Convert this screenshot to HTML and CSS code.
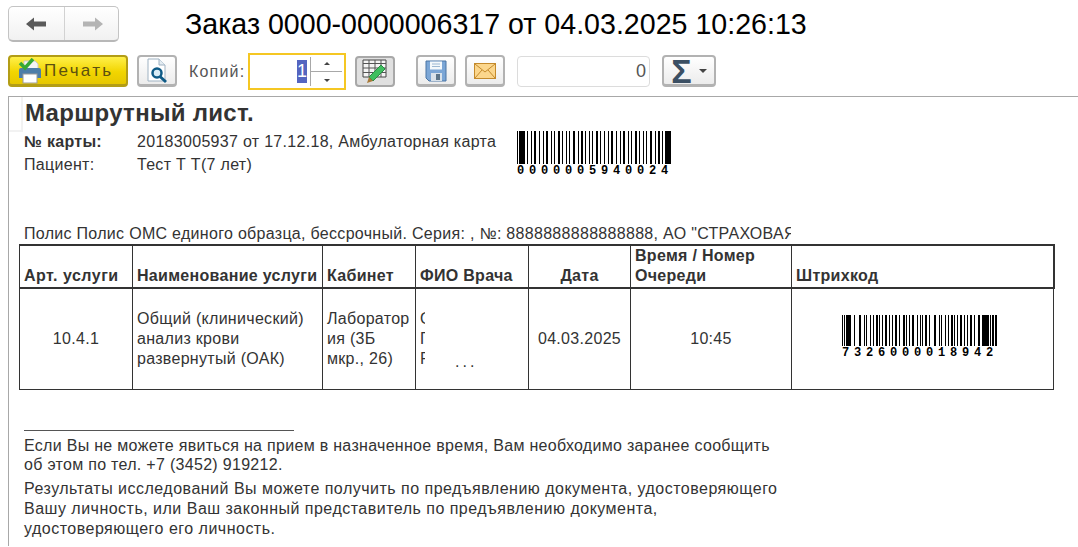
FILE: index.html
```html
<!DOCTYPE html>
<html lang="ru">
<head>
    <meta charset="UTF-8">
    <title>Заказ 0000-0000006317</title>
    <link rel="stylesheet" href="styles.css">
</head>
<body>
    <header class="title-bar">
        <div class="nav-group">
            <button class="nav-btn">
                <svg width="24" height="16" viewBox="0 0 24 16"><path d="M1 8 9 1.500V5.500H21V10.500H9V14.500Z" fill="#5a5a5a"/></svg>
            </button>
            <button class="nav-btn">
                <svg width="24" height="16" viewBox="0 0 24 16"><path d="M23 8 15 1.500V5.500H3V10.500H15V14.500Z" fill="#b4b4b4"/></svg>
            </button>
        </div>
        <h1 class="page-title">Заказ 0000-0000006317 от 04.03.2025 10:26:13</h1>
    </header>

    <div class="toolbar">
        <button class="btn btn-print">
            <svg width="24" height="26" viewBox="0 0 24 26">
                <path d="M6 12V3H17L20 6V12Z" fill="#f4f4f4" stroke="#c8c8c8"/>
                <path d="M1 12Q1 10 3 10H21Q23 10 23 12V20H1Z" fill="#4d7ea8"/>
                <rect x="5" y="16" width="14" height="9" fill="#fff" stroke="#9a9a9a"/>
                <path d="M2 5 7 10 15 1" fill="none" stroke="#35a835" stroke-width="3.500"/>
            </svg>
            <span>Печать</span>
        </button>
        <button class="btn btn-icon btn-preview">
            <svg width="24" height="26" viewBox="0 0 24 26">
                <path d="M3 1H14L20 7V23H3Z" fill="#fff" stroke="#9fb2c2"/>
                <path d="M14 1V7H20" fill="#e4ecf2" stroke="#9fb2c2"/>
                <circle cx="12" cy="15" r="4.500" fill="#d8ecf6" stroke="#0e5a86" stroke-width="2.500"/>
                <path d="M15 18.500 21 24" stroke="#0e5a86" stroke-width="3"/>
            </svg>
        </button>
        <label class="copies-label">Копий:</label>
        <div class="spin-field">
            <div class="spin-value"><span class="selected">1</span></div>
            <div class="spin-arrows">
                <div class="spin-arrow"><i class="tri-up"></i></div>
                <div class="spin-arrow"><i class="tri-down"></i></div>
            </div>
        </div>
        <button class="btn btn-icon btn-pressed btn-table">
            <svg width="26" height="26" viewBox="0 0 26 26">
                <path d="M1 2H24V19H1Z" fill="#f4f4f4" stroke="#444"/>
                <path d="M1 5.500H24M1 10H24M1 14.500H24M7 2V19M13 2V19M19 2V19" stroke="#555"/>
                <path d="M7 19 19 7 23 11 11 23Z" fill="#3fbf5f" stroke="#2a8a44"/>
                <path d="M7 19 5 25 11 23Z" fill="#a87a3a"/>
            </svg>
        </button>
        <button class="btn btn-icon btn-save">
            <svg width="22" height="22" viewBox="0 0 22 22">
                <path d="M1 1H21V21H4L1 18Z" fill="#7ba6d6" stroke="#4a74a4"/>
                <rect x="5" y="1.500" width="12" height="8" fill="#f4f8fb"/>
                <path d="M7 4H15M7 6.500H15" stroke="#9db8d2"/>
                <rect x="6" y="13" width="11" height="8" fill="#d9e2ea"/>
                <rect x="11" y="14" width="4" height="6" fill="#5c7488"/>
            </svg>
        </button>
        <button class="btn btn-icon btn-mail">
            <svg width="22" height="16" viewBox="0 0 22 16">
                <rect x="0.500" y="0.500" width="21" height="15" fill="#fbd68c" stroke="#c48a2c"/>
                <path d="M1 1 11 9 21 1M1 15 8 7M21 15 14 7" fill="none" stroke="#c48a2c"/>
            </svg>
        </button>
        <div class="sum-field">0</div>
        <button class="btn btn-sum"><span class="sigma">Σ</span><i class="tri-down tri-dark"></i></button>
    </div>

    <main class="report">
        <div class="report-head">
            <div class="corner"></div>
            <h2 class="report-title">Маршрутный лист.</h2>
        </div>

        <div class="patient-block">
            <div class="patient-info">
                <b class="info-label">№ карты:</b>
                <span>20183005937 от 17.12.18, Амбулаторная карта</span>
                <span class="info-label">Пациент:</span>
                <span>Тест Т Т(7 лет)</span>
            </div>
            <div class="barcode barcode-card">
                <svg width="155" height="33" viewBox="0 0 155 33">
                    <rect x="0" y="0" width="1" height="33"/>
                    <rect x="2" y="0" width="6" height="33"/>
                    <line x1="10" y1="16.500" x2="147" y2="16.500" stroke="#000" stroke-width="33"
                        stroke-dasharray="1 3 1 2 2 3 1 3 1 2 2 3 1 2 1 3 2 2 1 3 1 2 1 3 2 3 1 2 2 2 1 3 1 2 1 3 2 2 1 3"/>
                    <rect x="148" y="0" width="6" height="33"/>
                </svg>
                <div class="barcode-digits">0000005940024</div>
            </div>
        </div>

        <div class="policy-line">Полис Полис ОМС единого образца, бессрочный. Серия: , №: 8888888888888888, АО "СТРАХОВАЯ</div>

        <table class="services">
            <colgroup>
                <col class="col-art">
                <col class="col-name">
                <col class="col-room">
                <col class="col-doctor">
                <col class="col-date">
                <col class="col-time">
                <col class="col-code">
            </colgroup>
            <thead>
                <tr>
                    <th>Арт. услуги</th>
                    <th>Наименование услуги</th>
                    <th>Кабинет</th>
                    <th>ФИО Врача</th>
                    <th class="center">Дата</th>
                    <th>Время / Номер<br>Очереди</th>
                    <th>Штрихкод</th>
                </tr>
            </thead>
            <tbody>
                <tr>
                    <td class="center">10.4.1</td>
                    <td>Общий (клинический) анализ крови развернутый (ОАК)</td>
                    <td>Лаборатор<br>ия (3Б<br>мкр., 26)</td>
                    <td>
                        <div class="doctor-cell">
                            <div class="doctor-clip">О<br>П<br>Р</div>
                            <div class="doctor-more">...</div>
                        </div>
                    </td>
                    <td class="center">04.03.2025</td>
                    <td class="center">10:45</td>
                    <td>
                        <div class="barcode barcode-row">
                            <svg width="156" height="31" viewBox="0 0 156 31">
                                <rect x="0" y="0" width="1" height="31"/>
                                <rect x="2" y="0" width="1" height="31"/>
                                <rect x="4" y="0" width="5" height="31"/>
                                <line x1="12" y1="15.500" x2="138" y2="15.500" stroke="#000" stroke-width="31"
                                    stroke-dasharray="1 4 2 3 1 1 1 3 1 2 1 2 2 1 1 2 1 2 2 2 1 2 1 2 2 2 1 3 2 1 1 2 1 2 2 3 1 2 1 1 1 2 2 2"/>
                                <rect x="140" y="0" width="7" height="31"/>
                                <rect x="148" y="0" width="1" height="31"/>
                                <rect x="150" y="0" width="2" height="31"/>
                                <rect x="153" y="0" width="2" height="31"/>
                            </svg>
                            <div class="barcode-digits">7326000018942</div>
                        </div>
                    </td>
                </tr>
            </tbody>
        </table>

        <div class="notes">
            <div class="notes-rule"></div>
            <p class="note-first">Если Вы не можете явиться на прием в назначенное время, Вам необходимо заранее сообщить<br>об этом по тел. +7 (3452) 919212.</p>
            <p class="note-second">Результаты исследований Вы можете получить по предъявлению документа, удостоверяющего<br>Вашу личность, или Ваш законный представитель по предъявлению документа,<br>удостоверяющего его личность.</p>
        </div>
    </main>
</body>
</html>
```

FILE: styles.css
```css
html, body {
    margin: 0;
    height: 547px;
    overflow: hidden;
    background: #fff;
}

body {
    font-family: "Liberation Sans", Arial, sans-serif;
    color: #333;
}

button {
    font-family: inherit;
    padding: 0;
    cursor: pointer;
}

/* title */
.title-bar {
    display: flex;
    align-items: center;
    height: 48px;
    padding-left: 8px;
}

.nav-group {
    display: flex;
    width: 111px;
    height: 36px;
    box-sizing: border-box;
    border: 1px solid #c4c4c4;
    border-bottom: 2px solid #b8b8b8;
    border-radius: 5px;
    background: linear-gradient(#ffffff, #f1f1f1);
    overflow: hidden;
}

.nav-btn {
    flex: 1;
    border: none;
    background: none;
    display: flex;
    align-items: center;
    justify-content: center;
}

.nav-btn:first-child {
    flex: 0 0 56px;
    border-right: 1px solid #d2d2d2;
}

.page-title {
    margin: 0 0 0 66px;
    font-size: 28.600px;
    font-weight: normal;
    color: #000;
    white-space: nowrap;
}

/* toolbar */
.toolbar {
    display: flex;
    align-items: center;
    height: 37px;
    padding: 5px 0 0 8px;
    margin-bottom: 6px;
}

.btn {
    height: 32px;
    margin-bottom: 1px;
    box-sizing: border-box;
    border: 2px solid #b2b2b2;
    border-bottom-width: 3px;
    border-radius: 4px;
    background: linear-gradient(#ffffff, #ececec);
    display: flex;
    align-items: center;
    justify-content: center;
}

.btn-icon {
    width: 40px;
}

.btn-print {
    width: 120px;
    border-color: #b39d16;
    background: linear-gradient(#fff04a, #f2d500 55%, #e6c700);
    justify-content: flex-start;
    padding-left: 8px;
    gap: 2px;
    font-size: 17px;
    letter-spacing: 2.300px;
    color: #5c5010;
}

.btn-preview {
    margin-left: 9px;
}

.copies-label {
    width: 56px;
    margin-left: 12px;
    font-size: 16px;
    letter-spacing: 1.200px;
    color: #555;
    white-space: nowrap;
}

.spin-field {
    display: flex;
    width: 98px;
    height: 37px;
    box-sizing: border-box;
    margin-left: 3px;
    border: 2px solid #f5c723;
    background: #fff;
}

.spin-value {
    width: 61px;
    box-sizing: border-box;
    display: flex;
    align-items: center;
    justify-content: flex-end;
    padding-right: 3px;
    font-size: 18px;
    border-right: 1px solid #a8a8a8;
    margin: 2px 0;
}

.selected {
    background: #5465c0;
    color: #fff;
    line-height: 23px;
}

.spin-arrows {
    flex: 1;
    display: flex;
    flex-direction: column;
    padding-right: 2px;
}

.spin-arrow {
    flex: 1;
    display: flex;
    align-items: center;
    justify-content: center;
}

.spin-arrow:first-child {
    border-bottom: 1px solid #a8a8a8;
}

.tri-up, .tri-down {
    display: block;
    width: 0;
    height: 0;
    border-left: 3px solid transparent;
    border-right: 3px solid transparent;
}

.tri-up {
    border-bottom: 3px solid #444;
}

.tri-down {
    border-top: 3px solid #444;
}

.btn-pressed {
    background: #e0e0e0;
    border-color: #a8a8a8;
    border-bottom-width: 2px;
    height: 31px;
}

.btn-table {
    margin-left: 9px;
}

.btn-save {
    margin-left: 21px;
}

.btn-mail {
    margin-left: 9px;
}

.sum-field {
    width: 133px;
    height: 31px;
    box-sizing: border-box;
    margin-left: 12px;
    border: 1px solid #dcdcdc;
    border-radius: 4px;
    font-size: 18px;
    line-height: 29px;
    text-align: right;
    padding-right: 3px;
    color: #555;
}

.btn-sum {
    width: 54px;
    margin-left: 12px;
    gap: 7px;
}

.sigma {
    font-size: 34px;
    font-weight: bold;
    line-height: 26px;
    color: #3b4f63;
}

.tri-dark {
    border-left-width: 4px;
    border-right-width: 4px;
    border-top-width: 4px;
}

/* report */
.report {
    margin-left: 8px;
    height: 450px;
    box-sizing: border-box;
    border-top: 1px solid #a8a8a8;
    border-left: 1px solid #a8a8a8;
    font-size: 16px;
    letter-spacing: 0.300px;
    line-height: 20px;
}

.report-head {
    display: flex;
    height: 34px;
}

.corner {
    width: 12px;
    height: 33px;
    border-right: 2px solid #f2f2f2;
    border-bottom: 2px solid #f2f2f2;
}

.report-title {
    margin: 0 0 0 2px;
    font-size: 24px;
    letter-spacing: 0.300px;
    line-height: 32px;
    font-weight: bold;
    color: #333;
}

.patient-block {
    display: flex;
    height: 91px;
    padding-left: 15px;
}

.patient-info {
    width: 493px;
    margin-top: -1px;
    display: grid;
    grid-template-columns: 113px 1fr;
    grid-auto-rows: 23px;
    align-items: center;
    align-content: start;
    white-space: nowrap;
}

.info-label {
    color: #333;
}

.barcode {
    display: flex;
    flex-direction: column;
}

.barcode svg {
    display: block;
}

.barcode-digits {
    margin-top: 2px;
    font-family: "Liberation Mono", monospace;
    font-size: 12px;
    font-weight: bold;
    line-height: 11px;
    letter-spacing: 4.800px;
    color: #000;
    white-space: nowrap;
}

.policy-line {
    width: 767px;
    margin-left: 15px;
    height: 22px;
    line-height: 24px;
    overflow: hidden;
    white-space: nowrap;
}

/* table */
.services {
    table-layout: fixed;
    width: 1034px;
    margin-left: 10px;
    border-collapse: collapse;
}

.col-art { width: 113px; }
.col-name { width: 190px; }
.col-room { width: 93px; }
.col-doctor { width: 113px; }
.col-date { width: 102px; }
.col-time { width: 161px; }
.col-code { width: 262px; }

.services th {
    height: 40px;
    padding: 0 4px 1px;
    border: 2px solid #333;
    border-width: 2px 1px;
    text-align: left;
    vertical-align: bottom;
    font-size: 16px;
    line-height: 20px;
    color: #333;
    white-space: nowrap;
}

.services th:first-child,
.services td:first-child {
    border-left: 1px solid #333;
}

.services th:first-child {
    letter-spacing: 0.500px;
}

.services th:last-child {
    border-right: 2px solid #333;
}

.services td {
    height: 100px;
    padding: 0 4px;
    border: 1px solid #333;
    vertical-align: middle;
    color: #333;
}

.services .center {
    text-align: center;
}

.doctor-cell {
    display: flex;
    align-items: flex-end;
}

.doctor-clip {
    width: 5px;
    overflow: hidden;
}

.doctor-more {
    margin-left: 30px;
    letter-spacing: 3px;
    line-height: 14px;
}

.barcode-row {
    align-items: flex-start;
    margin: 0 0 4px 46px;
}

/* notes */
.notes {
    padding: 40px 0 0 15px;
}

.notes-rule {
    width: 270px;
    border-top: 1px solid #555;
    margin-bottom: 5px;
}

.notes p {
    margin: 0;
    white-space: nowrap;
}

.notes .note-first {
    line-height: 19px;
    margin-bottom: 5px;
}

.notes .note-second {
    letter-spacing: 0.490px;
}
```
